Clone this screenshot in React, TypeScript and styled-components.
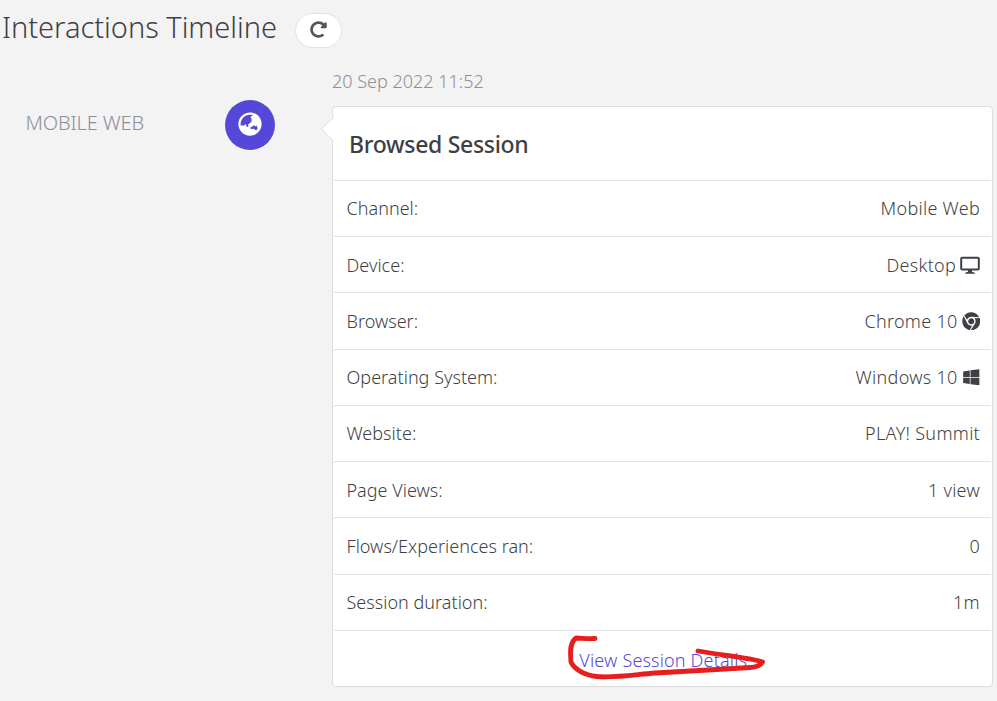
import React from 'react';
import styled, { createGlobalStyle } from 'styled-components';
import { FaChrome, FaWindows, FaGlobeAsia, FaRedoAlt } from 'react-icons/fa';

const GlobalStyle = createGlobalStyle`
  * { box-sizing: border-box; }
  body {
    margin: 0;
    background: #f3f3f3;
    color: #3f3f46;
    font-family: 'Noto Sans', 'Open Sans', sans-serif;
    font-weight: 300;
    overflow: hidden;
  }
`;

const Page = styled.main`
  height: 701px;
  padding: 0 4px 0 3px;
`;

const Header = styled.header`
  display: flex;
  align-items: flex-start;
  height: 72px;
`;

const Title = styled.h1`
  margin: 7px 18px 0 -1px;
  width: 275px;
  font-size: 29px;
  font-weight: 350;
  line-height: 40px;
  letter-spacing: -0.02px;
  white-space: nowrap;
`;

const RefreshButton = styled.button`
  display: flex;
  align-items: center;
  justify-content: center;
  width: 47px;
  height: 35px;
  margin-top: 13px;
  padding: 0 0 2px;
  border: 1px solid #e3e3e5;
  border-radius: 18px;
  background: #fff;
  color: #54545c;
`;

const Timeline = styled.section`
  display: grid;
  grid-template-columns: 222px 50px 1fr;
`;

const Channel = styled.div`
  padding: 36px 0 0 22.5px;
  color: #8e8e96;
  font-size: 20px;
  line-height: 30px;
  letter-spacing: -0.15px;
`;

const Marker = styled.div`
  display: flex;
  align-items: center;
  justify-content: center;
  width: 50px;
  height: 50px;
  margin-top: 28px;
  padding-bottom: 3px;
  border-radius: 50%;
  background: #5548d9;
  color: #fff;
`;

const Entry = styled.article`
  margin-left: 57px;
`;

const Timestamp = styled.time`
  display: block;
  height: 34px;
  color: #8e8e96;
  font-size: 18px;
  line-height: 19px;
`;

const Card = styled.div`
  position: relative;
  height: 581px;
  border: 1px solid #dedee0;
  border-radius: 4px;
  background: #fff;
`;

const Pointer = styled.svg`
  position: absolute;
  left: -12px;
  top: 8px;
`;

const CardHeader = styled.h2`
  display: flex;
  align-items: center;
  height: 72.8px;
  margin: 0;
  padding: 1.5px 16px 0;
  font-size: 23px;
  font-weight: 500;
  letter-spacing: -0.3px;
`;

const Row = styled.div<{ $centered?: boolean }>`
  display: flex;
  align-items: center;
  justify-content: ${(p) => (p.$centered ? 'center' : 'space-between')};
  height: 56.25px;
  margin: 0 1px;
  padding: 0 11px 0 12.5px;
  border-top: 1px solid #e1e1e3;
  font-size: 18px;
`;

const Label = styled.span`
  letter-spacing: 0.02px;
`;

const Value = styled.span`
  display: flex;
  align-items: center;
  gap: 4px;
  letter-spacing: 0.28px;
`;

const DetailsLink = styled.a`
  position: relative;
  margin: 2.5px 0 0;
  color: #5548d9;
  letter-spacing: 0.17px;
`;

const Scribble = styled.svg`
  position: absolute;
  left: -12px;
  top: -14px;
  overflow: visible;
  pointer-events: none;
`;

const MonitorIcon = () => (
  <svg width="20" height="18" viewBox="0 0 20 18" fill="none">
    <rect x="1.2" y="1.7" width="17.6" height="11.8" rx="1" stroke="currentColor" strokeWidth="2" />
    <path d="M8 13.5h4v2.2l2.8 1v1.1H5.2v-1.1l2.8-1z" fill="currentColor" />
  </svg>
);

const rows: { label: string; value: string; icon?: React.ReactNode }[] = [
  { label: 'Channel:', value: 'Mobile Web' },
  { label: 'Device:', value: 'Desktop', icon: <MonitorIcon /> },
  { label: 'Browser:', value: 'Chrome 10', icon: <FaChrome size={18.5} /> },
  { label: 'Operating System:', value: 'Windows 10', icon: <FaWindows size={18.5} /> },
  { label: 'Website:', value: 'PLAY! Summit' },
  { label: 'Page Views:', value: '1 view' },
  { label: 'Flows/Experiences ran:', value: '0' },
  { label: 'Session duration:', value: '1m' },
];

export default function App() {
  return (
    <>
      <GlobalStyle />
      <Page>
        <Header>
          <Title>Interactions Timeline</Title>
          <RefreshButton aria-label="Refresh">
            <FaRedoAlt size={17} />
          </RefreshButton>
        </Header>
        <Timeline>
          <Channel>MOBILE WEB</Channel>
          <Marker>
            <FaGlobeAsia size={24} />
          </Marker>
          <Entry>
            <Timestamp>20 Sep 2022 11:52</Timestamp>
            <Card>
              <Pointer width="13" height="28" viewBox="0 0 13 28">
                <path d="M13 1.5 0.5 14 13 26.5" fill="#fff" stroke="#dedee0" />
              </Pointer>
              <CardHeader>Browsed Session</CardHeader>
              {rows.map((row) => (
                <Row key={row.label}>
                  <Label>{row.label}</Label>
                  <Value>
                    {row.value}
                    {row.icon}
                  </Value>
                </Row>
              ))}
              <Row $centered>
                <DetailsLink>
                  View Session Details
                  <Scribble width="200" height="45" viewBox="567 633 200 45">
                    <path
                      d="M595 637.5C588 638 581 637 576 637C570 641 570 650 571 661C574 668 584 674 597 675.5C614 677 632 674 655 672L708 669L750 666.5C757 666 761 664 762.5 661C750 657 720 654 698 650"
                      fill="none"
                      stroke="#e61e1e"
                      strokeWidth="4.8"
                      strokeLinecap="round"
                      strokeLinejoin="round"
                    />
                  </Scribble>
                </DetailsLink>
              </Row>
            </Card>
          </Entry>
        </Timeline>
      </Page>
    </>
  );
}
